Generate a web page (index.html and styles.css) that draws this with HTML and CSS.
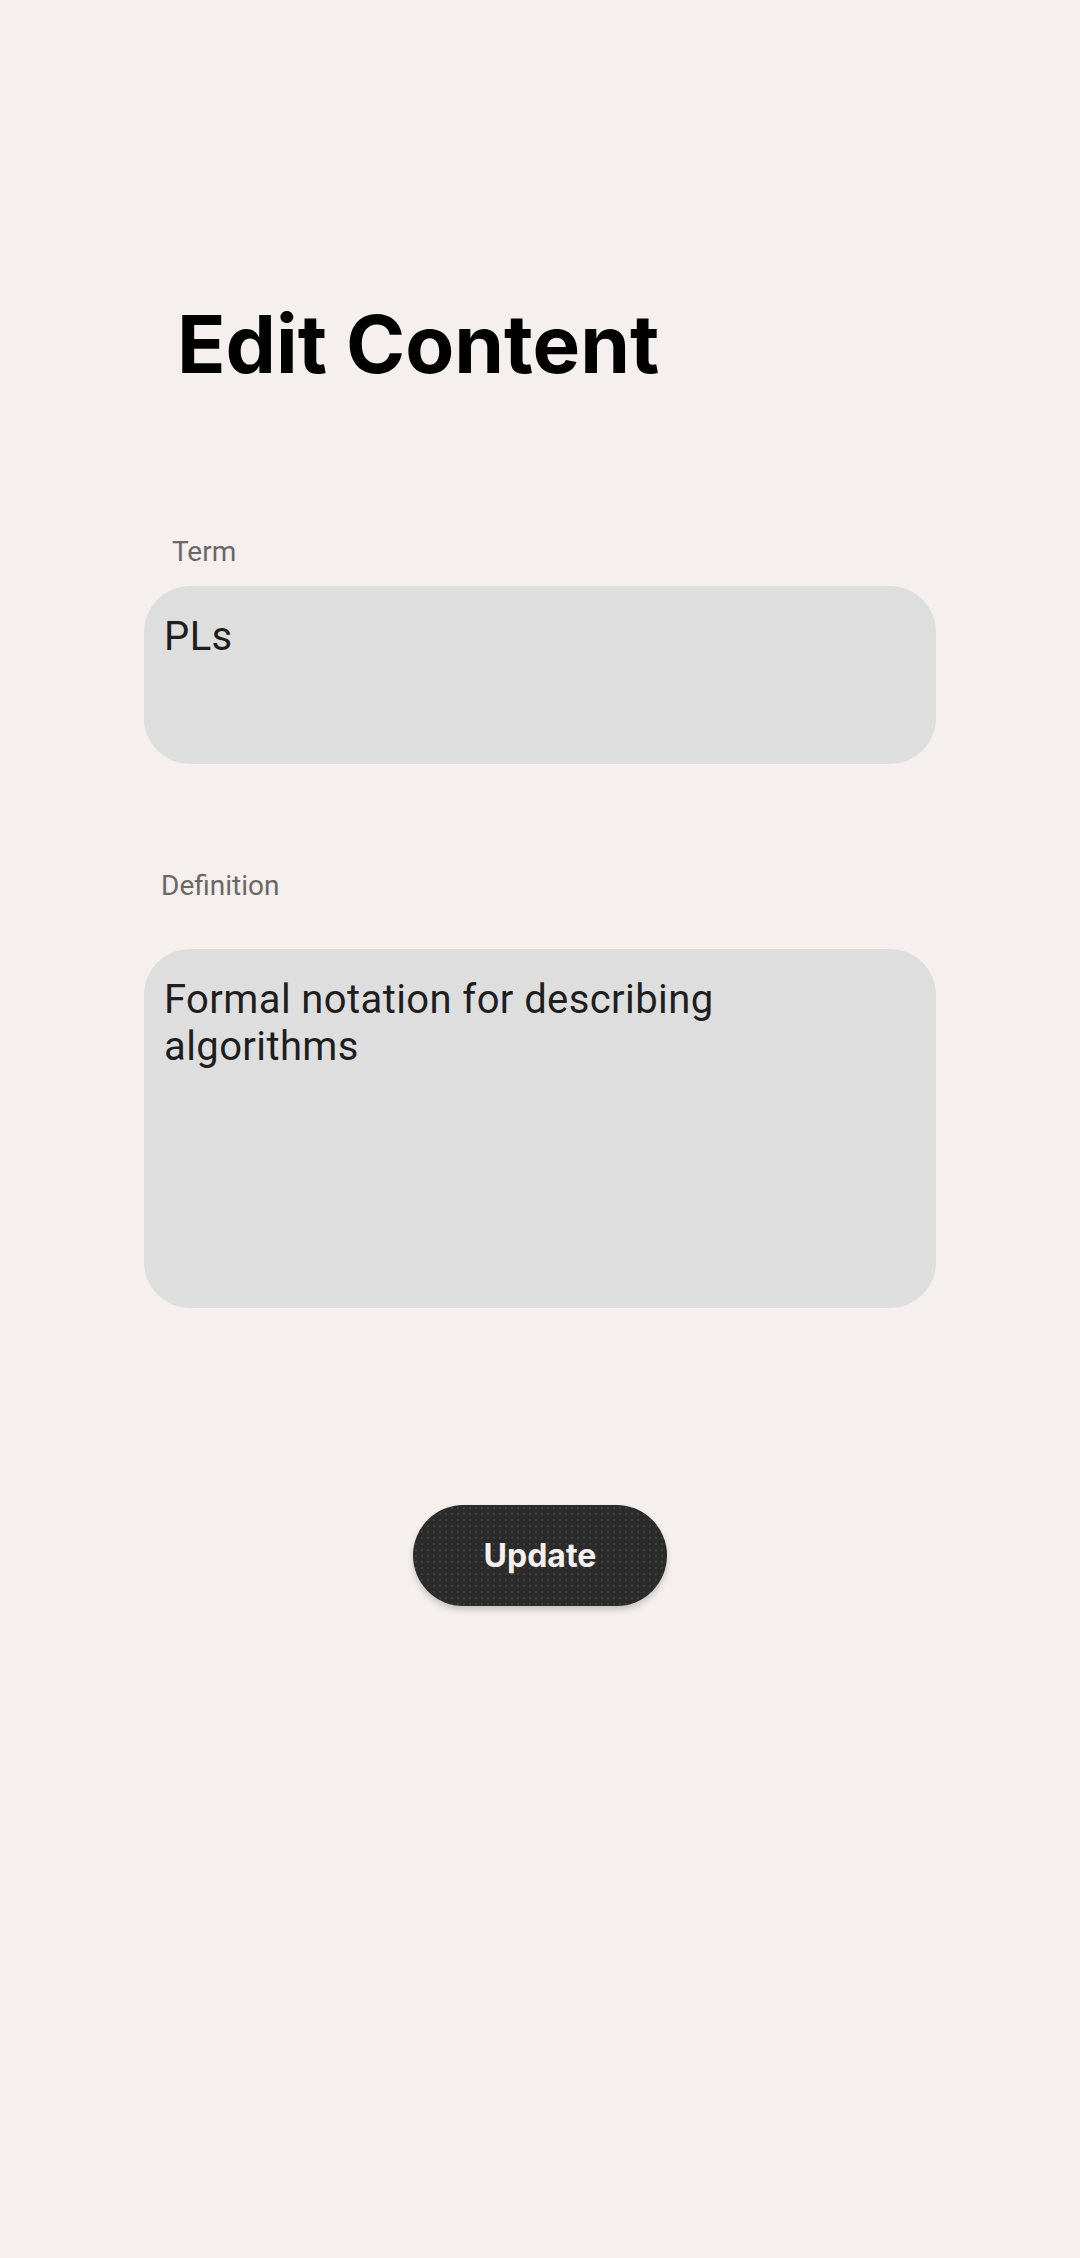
FILE: index.html
```html
<!DOCTYPE html>
<html lang="en">
<head>
<meta charset="utf-8">
<title>Edit Content</title>
<link rel="stylesheet" href="styles.css">
</head>
<body>
<main class="screen">
  <h1 class="title">Edit Content</h1>
  <section class="field field-term">
    <label class="label label-term">Term</label>
    <div class="box box-term">PLs</div>
  </section>
  <section class="field field-def">
    <label class="label label-def">Definition</label>
    <div class="box box-def">Formal notation for describing algorithms</div>
  </section>
  <div class="actions">
    <button class="btn">Update</button>
  </div>
</main>
</body>
</html>
```

FILE: styles.css
```css
html, body {
  margin: 0;
  padding: 0;
  background: #f5f0ed;
}
.screen {
  width: 1080px;
  height: 2258px;
  box-sizing: border-box;
  padding: 294px 144px 0 144px;
  display: flex;
  flex-direction: column;
}
.title {
  margin: 0 0 0 33px;
  font-family: Inter, "Noto Sans", sans-serif;
  font-weight: 700;
  font-size: 80px;
  line-height: 100px;
  color: #000;
}
.field {
  display: flex;
  flex-direction: column;
}
.field-term {
  margin-top: 142px;
}
.label {
  font-family: Roboto, "Liberation Sans", sans-serif;
  font-size: 28px;
  line-height: 32px;
  color: #6b6766;
}
.label-term {
  margin-left: 28px;
}
.label-def {
  margin-left: 17px;
}
.box {
  background: #dedede;
  border-radius: 46px;
  font-family: Roboto, "Liberation Sans", sans-serif;
  font-size: 40px;
  line-height: 47px;
  letter-spacing: 0.4px;
  color: #1e1e1e;
  box-sizing: border-box;
  padding: 27px 40px 0 20px;
}
.box-term {
  margin-top: 18px;
  height: 178px;
}
.field-def {
  margin-top: 106px;
}
.box-def {
  margin-top: 47px;
  height: 359px;
}
.actions {
  display: flex;
  justify-content: center;
  margin-top: 197px;
}
.btn {
  width: 254px;
  height: 101px;
  border: none;
  border-radius: 51px;
  background-color: #2b2b2b;
  background-image: radial-gradient(circle, rgba(255,255,255,0.09) 0.8px, transparent 1.2px);
  background-size: 6px 6px;
  box-shadow: 0 4px 6px rgba(0,0,0,0.18);
  color: #f5f0ed;
  font-family: Inter, "Noto Sans", sans-serif;
  font-weight: 700;
  font-size: 32px;
  padding: 0;
}
```
